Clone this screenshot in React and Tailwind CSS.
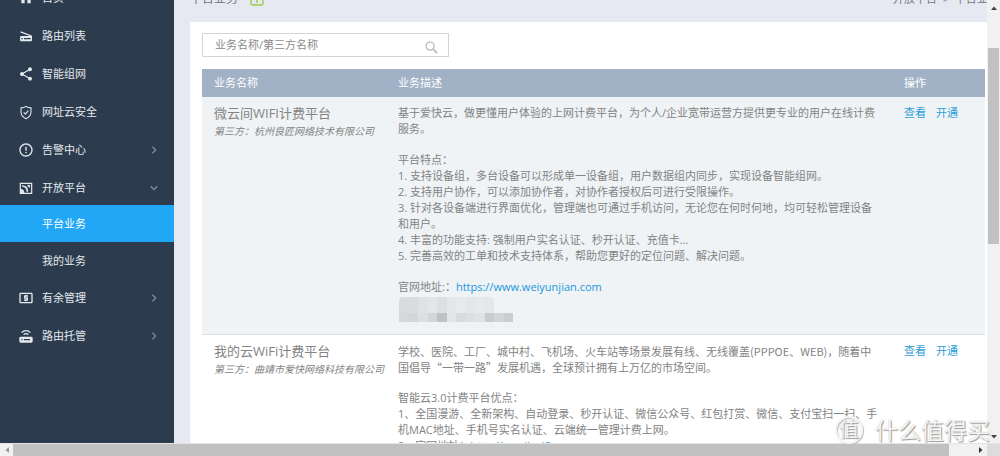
import {
  MdErrorOutline,
  MdHome,
  MdLocalAtm,
  MdScanner,
  MdShare,
} from "react-icons/md";

function ShieldIcon({ className }) {
  return (
    <svg viewBox="0 0 24 24" fill="none" stroke="currentColor" strokeWidth="1.6" className={className}>
      <path d="M12 3.5 C9.5 5.2 6.8 5.8 4.5 5.8 V12 C4.5 17 7.5 20 12 22 C16.5 20 19.5 17 19.5 12 V5.8 C17.2 5.8 14.5 5.2 12 3.5 Z" />
      <path d="M8.5 12.5 l2.8 2.8 l4.2-5.3" />
    </svg>
  );
}

function PlatformIcon({ className }) {
  return (
    <svg viewBox="0 0 24 24" fill="none" stroke="currentColor" strokeWidth="1.8" className={className}>
      <path d="M3.5 5 H20.5 V20 H3.5 Z" />
      <path d="M6 9 C11 9 14 12.5 14 17.5" strokeWidth="2.4" />
      <path d="M14 8 H17.5 V11.5 M17.5 8 L14.5 11" strokeWidth="1.5" />
      <path d="M4 13.5 C7.5 13.5 9.5 15.8 9.5 19.5 H4 Z" fill="currentColor" stroke="none" />
    </svg>
  );
}

function RouterIcon({ className }) {
  return (
    <svg viewBox="0 0 24 24" fill="none" stroke="currentColor" strokeWidth="2" className={className}>
      <path d="M5.5 7 C9 3 15 3 18.5 7" />
      <path d="M8.5 10 C10.5 7.8 13.5 7.8 15.5 10" />
      <path
        d="M4 13 H20 A2 2 0 0 1 22 15 V20 A2 2 0 0 1 20 22 H4 A2 2 0 0 1 2 20 V15 A2 2 0 0 1 4 13 Z M5 16.5 V18.5 H7 V16.5 Z M9 16.5 V18.5 H18 V16.5 Z"
        fill="currentColor"
        fillRule="evenodd"
        stroke="none"
      />
    </svg>
  );
}

function SearchIcon({ className }) {
  return (
    <svg viewBox="0 0 14 14" fill="none" stroke="currentColor" className={className}>
      <circle cx="5.5" cy="5.5" r="4.3" strokeWidth="1.5" />
      <path d="M8.8 8.8 L13 13" strokeWidth="2" />
    </svg>
  );
}

function Chevron({ open }) {
  return (
    <svg viewBox="0 0 8 8" fill="none" stroke="#8491a0" strokeWidth="1.3" className="w-2 h-2">
      <path d={open ? "M0.8 2.2 L4 5.6 L7.2 2.2" : "M2.4 0.6 L5.6 4 L2.4 7.4"} />
    </svg>
  );
}

const menu = [
  { label: "首页", icon: MdHome },
  { label: "路由列表", icon: MdScanner },
  { label: "智能组网", icon: MdShare },
  { label: "网址云安全", icon: ShieldIcon },
  { label: "告警中心", icon: MdErrorOutline, more: true },
  {
    label: "开放平台",
    icon: PlatformIcon,
    more: true,
    children: ["平台业务", "我的业务"],
  },
  { label: "有余管理", icon: MdLocalAtm, more: true },
  { label: "路由托管", icon: RouterIcon, more: true },
];

const services = [
  {
    name: "微云间WIFI计费平台",
    vendor: "杭州良匠网络技术有限公司",
    blocks: [
      ["基于爱快云，做更懂用户体验的上网计费平台，为个人/企业宽带运营方提供更专业的用户在线计费服务。"],
      [
        "平台特点：",
        "1. 支持设备组，多台设备可以形成单一设备组，用户数据组内同步，实现设备智能组网。",
        "2. 支持用户协作，可以添加协作者，对协作者授权后可进行受限操作。",
        "3. 针对各设备端进行界面优化，管理端也可通过手机访问，无论您在何时何地，均可轻松管理设备和用户。",
        "4. 丰富的功能支持: 强制用户实名认证、秒开认证、充值卡...",
        "5. 完善高效的工单和技术支持体系，帮助您更好的定位问题、解决问题。",
      ],
    ],
    siteLabel: "官网地址:：",
    site: "https://www.weiyunjian.com",
    masked: true,
  },
  {
    name: "我的云WiFi计费平台",
    vendor: "曲靖市爱快网络科技有限公司",
    blocks: [
      ["学校、医院、工厂、城中村、飞机场、火车站等场景发展有线、无线覆盖(PPPOE、WEB)，随着中国倡导“一带一路”发展机遇，全球预计拥有上万亿的市场空间。"],
      [
        "智能云3.0计费平台优点：",
        "1、全国漫游、全新架构、自动登录、秒开认证、微信公众号、红包打赏、微信、支付宝扫一扫、手机MAC地址、手机号实名认证、云端统一管理计费上网。",
      ],
    ],
    siteLabel: "2、官网地址：",
    site: "http://yun.ikwifi.com",
    tight: true,
  },
];

function Sidebar() {
  return (
    <aside className="w-[174px] shrink-0 bg-[#2c3b4d] text-[#e4e9ee] overflow-hidden">
      <nav className="-mt-[21px]">
        {menu.map(({ label, icon: Icon, more, children }) => (
          <div key={label}>
            <button className="w-full h-[38px] pl-[18px] pr-4 flex items-center">
              <Icon className="w-4 h-4 mr-2" />
              <span className="flex-1 text-left">{label}</span>
              {more && <Chevron open={!!children} />}
            </button>
            {children && (
              <div className="-mt-0.5">
                {children.map((child, i) => (
                  <a
                    key={child}
                    href="#"
                    className={`h-[37px] pl-[42px] flex items-center ${i === 0 ? "bg-[#22a7f7] text-white" : ""}`}
                  >
                    {child}
                  </a>
                ))}
              </div>
            )}
          </div>
        ))}
      </nav>
    </aside>
  );
}

const maskTop = ["bg-[#d9dcdf]", "bg-[#d9dcdf]", "bg-[#dfe1e4]", "bg-[#e3e5e8]", "bg-[#dcdfe1]", "bg-[#e5e8ea]", "bg-[#e7eaec]", "bg-[#e4e7e9]", "bg-[#e6e9eb]", "bg-[#e4e7e9]"];
const maskBottom = ["bg-[#d6d9dc]", "bg-[#d3d6d8]", "bg-[#dcdfe1]", "bg-[#d3d6d8]", "bg-[#bfc1c4]", "bg-[#e2e5e7]", "bg-[#d8dadd]", "bg-[#dcdfe1]", "bg-[#e0e2e5]", "bg-[#c9cccf]", "bg-[#d2d5d8]", "bg-[#cbced1]"];

function MaskedContact() {
  return (
    <div className="h-8 pt-0.5 pl-px" aria-hidden="true">
      <div className="flex w-[95px] h-4 rounded-t overflow-hidden">
        {maskTop.map((c, i) => (
          <span key={i} className={`flex-1 ${c}`} />
        ))}
      </div>
      <div className="flex w-[114px] h-[9px]">
        {maskBottom.map((c, i) => (
          <span key={i} className={`flex-1 ${c}`} />
        ))}
      </div>
    </div>
  );
}

function Line({ text }) {
  // the CJK family draws curly quotes full width
  const quoted = text.includes("“");
  return <p className={quoted ? "font-['Noto_Sans_CJK_SC',sans-serif]" : ""}>{text}</p>;
}

function ServiceRow({ service }) {
  return (
    <tr className="align-top border-b border-[#dcdfe2] odd:bg-[#eff3f6]">
      <td className="pl-3 pt-2">
        <h3 className="text-[13px] leading-4">{service.name}</h3>
        <p className="text-[10px] leading-5 italic whitespace-nowrap">第三方：{service.vendor}</p>
      </td>
      <td className="pl-3 pr-[14px] pt-2 pb-[7px]">
        {service.blocks.map((lines, i) => (
          <div key={i} className={service.tight && i > 0 ? "" : "mb-[15px]"}>
            {lines.map((line) => (
              <Line key={line} text={line} />
            ))}
          </div>
        ))}
        <p>
          {service.siteLabel}
          <a href="#" className="text-[#2196dc]">{service.site}</a>
        </p>
        {service.masked && <MaskedContact />}
      </td>
      <td className="pl-[11px] pt-2 text-[#2ba0d8]">
        <a href="#" className="mr-[10px]">查看</a>
        <a href="#">开通</a>
      </td>
    </tr>
  );
}

function Content() {
  return (
    <main className="flex-1 min-w-0 overflow-hidden bg-[#e6e9f2] pl-4">
      <header className="h-[22px] flex justify-between overflow-hidden">
        <div className="flex items-center h-4 -mt-[9px]">
          <h1 className="text-[12px] text-[#6f7782]">平台业务</h1>
          <svg viewBox="0 0 14 14" fill="none" stroke="#9bcb4b" strokeWidth="1.4" className="w-[14px] h-[14px] ml-3">
            <rect x="1" y="1" width="12" height="12" rx="2" />
            <path d="M7 3.5 V5 M7 6.5 V11" />
          </svg>
        </div>
        <div className="w-[94px] h-4 -mt-[9px] whitespace-nowrap overflow-hidden text-[#777]">
          开放平台 &nbsp;&gt;&nbsp; 平台业务
        </div>
      </header>
      <section className="bg-white min-h-full pl-3 pr-0.5 pt-[11px]">
        <div className="w-[247px] h-6 mb-3 pl-3 pr-[10px] flex items-center border border-[#d3d5d8]">
          <input
            type="text"
            aria-label="业务名称/第三方名称"
            placeholder="业务名称/第三方名称"
            className="flex-1 min-w-0 outline-none placeholder:text-[#8a8a8a]"
          />
          <button aria-label="搜索" className="mt-1">
            <SearchIcon className="w-[13px] h-[13px] text-[#b9bbbe]" />
          </button>
        </div>
        <table className="w-full table-fixed border-collapse">
          <thead>
            <tr className="h-7 bg-[#a2b2c6] text-white text-left">
              <th className="w-[184px] pl-3 font-normal">业务名称</th>
              <th className="pl-3 font-normal">业务描述</th>
              <th className="w-[92px] pl-[11px] font-normal">操作</th>
            </tr>
          </thead>
          <tbody>
            {services.map((s) => (
              <ServiceRow key={s.name} service={s} />
            ))}
          </tbody>
        </table>
      </section>
    </main>
  );
}

function Arrow({ d, className }) {
  return (
    <svg viewBox="0 0 8 8" className={`w-2 h-2 ${className}`} fill="currentColor">
      <path d={d} />
    </svg>
  );
}

function VerticalScrollbar() {
  return (
    <div className="w-[13px] shrink-0 flex flex-col items-center bg-[#f1f1f1]">
      <button aria-label="向上滚动" className="h-3 mb-9 pt-1">
        <Arrow d="M1 6 L4 2.5 L7 6 Z" className="text-[#444]" />
      </button>
      <div className="w-[11px] h-[196px] bg-[#c1c1c1]" />
      <div className="flex-1" />
      <button aria-label="向下滚动" className="h-3">
        <Arrow d="M1 2 L4 5.5 L7 2 Z" className="text-[#444]" />
      </button>
    </div>
  );
}

function HorizontalScrollbar() {
  return (
    <div className="h-[13px] shrink-0 flex items-center bg-[#f1f1f1] border-t border-[#e4e4e4]">
      <button aria-label="向左滚动" className="w-[13px] flex justify-center">
        <Arrow d="M6 1 L2.5 4 L6 7 Z" className="text-[#999]" />
      </button>
      <div className="flex-1 h-full bg-[#c1c1c1]" />
      <div className="w-[26px]" />
      <button aria-label="向右滚动" className="w-3 flex justify-center">
        <Arrow d="M2 1 L5.5 4 L2 7 Z" className="text-[#333]" />
      </button>
      <div className="w-[13px] h-full bg-[#dcdcdc]" />
    </div>
  );
}

function Watermark() {
  return (
    <div className="absolute right-[10px] bottom-3 flex items-center text-[#f4f4f4] pointer-events-none [text-shadow:1px_1px_1px_#999,0_0_1px_#bbb]">
      <span className="w-7 h-7 mr-3 rounded-full border-2 border-[#f4f4f4] shadow-[1px_1px_1px_#bbb,inset_1px_1px_1px_#bbb] flex items-center justify-center text-[20px] leading-none">
        值
      </span>
      <span className="text-[23px] leading-7">什么值得买</span>
    </div>
  );
}

export default function App() {
  return (
    <div className="relative h-screen flex flex-col overflow-hidden text-[11px] leading-4 text-[#838383] font-['Open_Sans','Noto_Sans_CJK_SC',sans-serif]">
      <div className="flex-1 min-h-0 flex">
        <Sidebar />
        <Content />
        <VerticalScrollbar />
      </div>
      <HorizontalScrollbar />
      <Watermark />
    </div>
  );
}
